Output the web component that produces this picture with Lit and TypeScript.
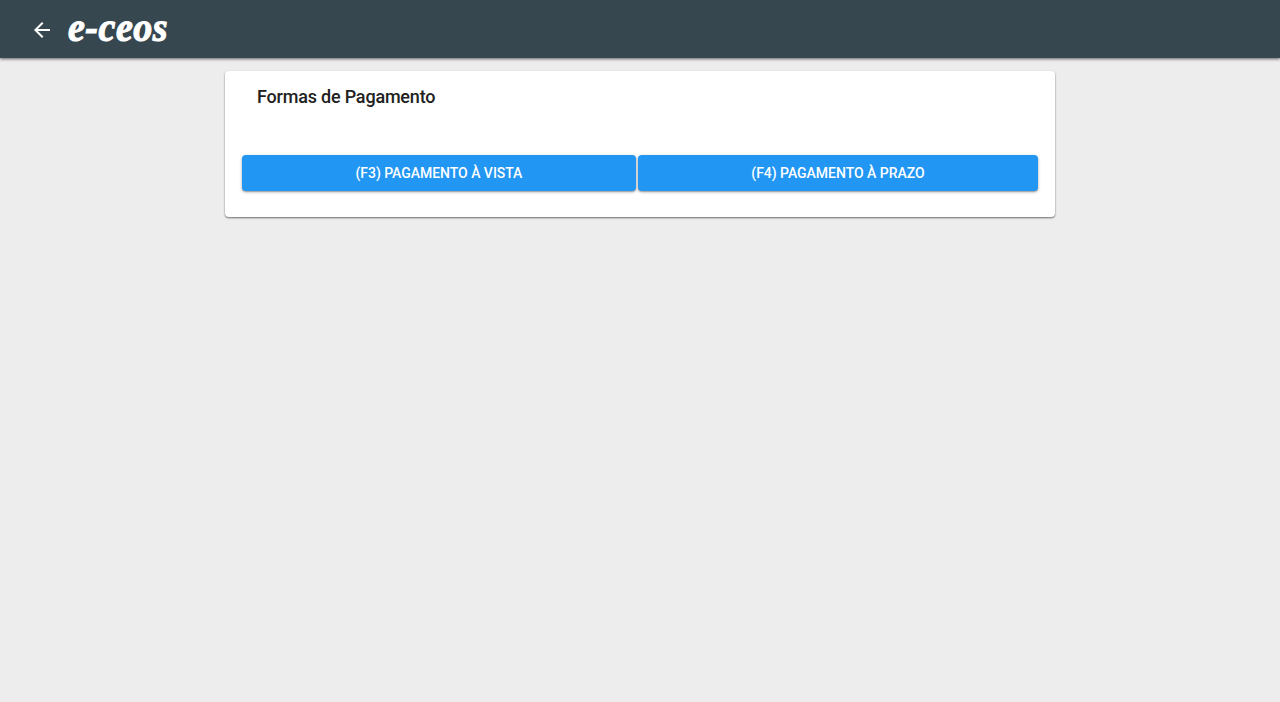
import { LitElement, html, css } from "lit";
import { customElement } from "lit/decorators.js";

@customElement("app-root")
export class AppRoot extends LitElement {
  static styles = css`
    :host {
      display: flex;
      flex-direction: column;
      height: 702px;
      background: #ededed;
      font-family: Roboto, "Liberation Sans", sans-serif;
      overflow: hidden;
    }
    .toolbar {
      height: 58px;
      flex: none;
      box-sizing: border-box;
      background: #37474f;
      display: flex;
      align-items: center;
      padding: 0 0 0 30px;
      gap: 14px;
      box-shadow: 0 1px 3px rgba(0,0,0,.6);
    }
    .back {
      width: 24px;
      height: 24px;
      display: block;
      fill: #fff;
      margin-top: 2px;
    }
    .logo {
      font-family: "Liberation Serif", serif;
      font-style: italic;
      font-weight: 700;
      font-size: 38px;
      line-height: 58px;
      color: #fff;
      -webkit-text-stroke: 1px #fff;
      letter-spacing: 0.5px;
      position: relative;
      top: -3px;
      display: inline-block;
      transform: scaleY(1.12);
    }
    .main {
      width: 830px;
      margin: 13px auto 0;
      box-sizing: border-box;
      background: #fff;
      border-radius: 4px;
      height: 146px;
      padding: 0 17px;
      display: flex;
      flex-direction: column;
      box-shadow: 0 1px 2px rgba(0,0,0,.55);
    }
    h1 {
      margin: 14px 0 0 15px;
      font-size: 18px;
      line-height: 24px;
      font-weight: 500;
      letter-spacing: -0.2px;
      color: #212121;
    }
    .actions {
      display: flex;
      gap: 2px;
      margin-top: 46px;
    }
    button {
      flex: 1 1 auto;
      height: 36px;
      border: 0;
      border-radius: 4px;
      background: #2196f3;
      color: #fff;
      font: 500 14px/36px Roboto, "Liberation Sans", sans-serif;
      letter-spacing: -0.03px;
      padding: 0 16px;
      box-shadow: 0 1px 3px rgba(0,0,0,.35), 0 1px 1px rgba(0,0,0,.14);
    }
  `;

  render() {
    return html`
      <header class="toolbar">
        <svg class="back" viewBox="0 0 24 24"><path d="M20 11H7.83l5.59-5.59L12 4l-8 8 8 8 1.41-1.41L7.83 13H20v-2z"/></svg>
        <span class="logo">e-ceos</span>
      </header>
      <section class="main">
        <h1>Formas de Pagamento</h1>
        <div class="actions">
          <button>(F3) PAGAMENTO À VISTA</button>
          <button>(F4) PAGAMENTO À PRAZO</button>
        </div>
      </section>
    `;
  }
}
